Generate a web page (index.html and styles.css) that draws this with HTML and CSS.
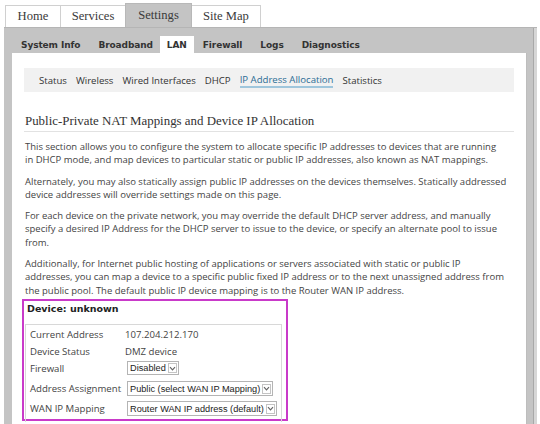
FILE: index.html
```html
<!DOCTYPE html>
<html>
<head>
<meta charset="utf-8">
<link rel="stylesheet" href="styles.css">
</head>
<body>
<div class="page">
  <div class="tabs">
    <div class="tab t-home">Home</div>
    <div class="tab t-services">Services</div>
    <div class="tab t-settings active">Settings</div>
    <div class="tab t-sitemap">Site Map</div>
  </div>
  <div class="panel">
    <div class="subtabs">
      <div class="subtab">System Info</div>
      <div class="subtab">Broadband</div>
      <div class="subtab active">LAN</div>
      <div class="subtab">Firewall</div>
      <div class="subtab">Logs</div>
      <div class="subtab">Diagnostics</div>
    </div>
    <div class="content">
      <div class="subnav">
        <span class="navitem">Status</span>
        <span class="navitem">Wireless</span>
        <span class="navitem">Wired Interfaces</span>
        <span class="navitem">DHCP</span>
        <span class="navitem current">IP Address Allocation</span>
        <span class="navitem">Statistics</span>
      </div>
      <h1 class="title">Public-Private NAT Mappings and Device IP Allocation</h1>
      <p class="para">This section allows you to configure the system to allocate specific IP addresses to devices that are running<br>in DHCP mode, and map devices to particular static or public IP addresses, also known as NAT mappings.</p>
      <p class="para">Alternately, you may also statically assign public IP addresses on the devices themselves. Statically addressed<br>device addresses will override settings made on this page.</p>
      <p class="para">For each device on the private network, you may override the default DHCP server address, and manually<br>specify a desired IP Address for the DHCP server to issue to the device, or specify an alternate pool to issue<br>from.</p>
      <p class="para">Additionally, for Internet public hosting of applications or servers associated with static or public IP<br>addresses, you can map a device to a specific public fixed IP address or to the next unassigned address from<br>the public pool. The default public IP device mapping is to the Router WAN IP address.</p>
      <div class="device">
        <div class="device-title">Device: unknown</div>
        <div class="device-table">
          <div class="row r1"><span class="label">Current Address</span><span class="value">107.204.212.170</span></div>
          <div class="row r2"><span class="label">Device Status</span><span class="value">DMZ device</span></div>
          <div class="row r3"><span class="label">Firewall</span><span class="select"><span class="sel-text">Disabled</span><span class="arrow"><svg width="7" height="5" viewBox="0 0 7 5"><path d="M1 1.2 L3.5 3.8 L6 1.2" fill="none" stroke="#666" stroke-width="1.2"/></svg></span></span></div>
          <div class="row r4"><span class="label">Address Assignment</span><span class="select"><span class="sel-text">Public (select WAN IP Mapping)</span><span class="arrow"><svg width="7" height="5" viewBox="0 0 7 5"><path d="M1 1.2 L3.5 3.8 L6 1.2" fill="none" stroke="#666" stroke-width="1.2"/></svg></span></span></div>
          <div class="row r5"><span class="label">WAN IP Mapping</span><span class="select"><span class="sel-text">Router WAN IP address (default)</span><span class="arrow"><svg width="7" height="5" viewBox="0 0 7 5"><path d="M1 1.2 L3.5 3.8 L6 1.2" fill="none" stroke="#666" stroke-width="1.2"/></svg></span></span></div>
        </div>
      </div>
    </div>
  </div>
</div>
</body>
</html>
```

FILE: styles.css
```css
html, body {
  margin: 0;
  padding: 0;
  background: #ffffff;
  height: 424px;
  overflow: hidden;
}

.page {
  padding: 3px 3px 0 4px;
}

.tabs {
  display: flex;
  align-items: flex-end;
  height: 24px;
  padding-left: 1px;
}

.tab {
  box-sizing: border-box;
  height: 22px;
  border: 1px solid #d0d0d0;
  border-bottom: none;
  background: #ffffff;
  font-family: "Liberation Serif", "Times New Roman", serif;
  font-size: 12.6px;
  color: #3a3a3a;
  display: flex;
  align-items: center;
  justify-content: center;
  margin-right: -1px;
}

.t-home { width: 56px; }
.t-services { width: 66px; }
.t-settings { width: 67px; }
.t-sitemap { width: 70px; }

.tab.active {
  height: 24px;
  background: #c4c4c4;
  border-color: #b8b8b8;
  position: relative;
  z-index: 1;
}

.panel {
  box-sizing: border-box;
  background: #c4c4c4;
  border-top: 1px solid #b5b5b5;
  padding: 0 10px 0 8px;
  box-shadow: inset -3px 0 0 #d6d6d6, inset -4px 0 0 #a8a8a8;
  height: 397px;
}

.subtabs {
  display: flex;
  align-items: flex-end;
  height: 25px;
}

.subtab {
  height: 17px;
  display: flex;
  align-items: center;
  padding: 0 9px;
  font-family: "DejaVu Sans", Verdana, sans-serif;
  font-weight: bold;
  font-size: 9px;
  color: #333;
  letter-spacing: -0.1px;
}

.subtab.active {
  background: #ffffff;
  padding: 0 7px;
  margin-left: -2px;
}

.content {
  box-sizing: border-box;
  background: #ffffff;
  padding: 15px 12px 0 12px;
  height: 371px;
  border-right: 1px solid #bdbdbd;
}

.subnav {
  background: #f1f1f1;
  height: 24px;
  display: flex;
  align-items: center;
  padding-left: 15px;
  gap: 9px;
  font-family: "Open Sans", "DejaVu Sans", sans-serif;
  font-size: 9.6px;
  color: #333;
}

.navitem.current {
  color: #2c6d95;
  border-bottom: 2px solid #9fc6dc;
  line-height: 12px;
  padding-top: 2px;
}

.title {
  margin: 20px 0 0 0;
  padding: 0 0 1px 1px;
  border-bottom: 1px solid #e2e2e2;
  font-family: "Liberation Serif", "Times New Roman", serif;
  font-weight: normal;
  font-size: 12.9px;
  color: #333;
  line-height: 18px;
}

.para {
  margin: 8px 0 0 1px;
  font-family: "Open Sans", "DejaVu Sans", sans-serif;
  font-size: 9.5px;
  line-height: 13.3px;
  color: #444;
  white-space: nowrap;
}

.device {
  box-sizing: border-box;
  width: 266px;
  margin: 2px 0 0 -2px;
  border: 2px solid #c93ac9;
  padding: 0 4px 0 1px;
  height: 122px;
}

.device-title {
  box-sizing: border-box;
  font-family: "DejaVu Sans", Verdana, sans-serif;
  font-weight: bold;
  font-size: 9.5px;
  line-height: 13px;
  color: #222;
  padding: 1px 0 0 2px;
  height: 23px;
}

.device-table {
  border: 1px solid #d8d8d8;
  border-bottom: none;
  padding: 1px 0 0 4px;
  height: 96px;
}

.row {
  display: flex;
  align-items: center;
  height: 17px;
  font-family: "Open Sans", "DejaVu Sans", sans-serif;
  font-size: 9.6px;
  color: #444;
  white-space: nowrap;
}

.row.r4 {
  height: 24px;
}

.row.r5 {
  height: 16px;
}

.label {
  width: 95px;
  flex: none;
}

.value {
  color: #444;
}

.select {
  flex: none;
  display: inline-flex;
  align-items: center;
  box-sizing: border-box;
  height: 14px;
  margin-left: 2px;
  border: 1px solid #b4b4b4;
  background: #fff;
  font-family: "Liberation Sans", Arial, sans-serif;
  font-size: 9.2px;
  color: #222;
  padding-left: 2px;
  white-space: nowrap;
}

.r4 .select, .r5 .select {
  height: 15px;
}

.sel-text {
  padding-right: 2px;
}

.arrow {
  display: inline-flex;
  align-items: center;
  justify-content: center;
  box-sizing: border-box;
  width: 9px;
  height: 10px;
  border: 1px solid #c4c4c4;
  margin-right: 1px;
}
```
